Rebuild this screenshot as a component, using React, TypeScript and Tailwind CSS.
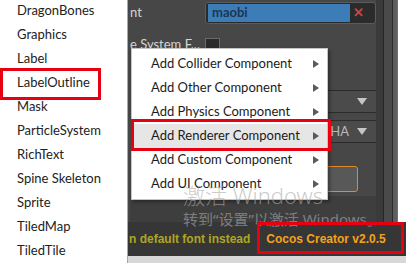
import { useState } from "react";

const components = [
  "DragonBones",
  "Graphics",
  "Label",
  "LabelOutline",
  "Mask",
  "ParticleSystem",
  "RichText",
  "Spine Skeleton",
  "Sprite",
  "TiledMap",
  "TiledTile",
];

const menuItems = [
  "Add Collider Component",
  "Add Other Component",
  "Add Physics Component",
  "Add Renderer Component",
  "Add Custom Component",
  "Add UI Component",
];

function Arrow() {
  return (
    <svg width="6" height="8" viewBox="0 0 6 8" className="shrink-0">
      <path d="M0 0 L6 4 L0 8 Z" fill="#5a5a5a" />
    </svg>
  );
}

function Caret() {
  return (
    <svg width="10" height="7" viewBox="0 0 10 7" className="shrink-0">
      <path d="M0 0 L10 0 L5 7 Z" fill="#c6c6c6" />
    </svg>
  );
}

export default function App() {
  const [active] = useState("Add Renderer Component");

  return (
    <div
      className="relative flex w-[406px] h-[263px] overflow-hidden bg-[#d8d8d8]"
      style={{ fontFamily: 'Lato, "Noto Sans CJK SC", sans-serif' }}
    >
      {/* component list */}
      <div className="w-[128px] shrink-0 bg-white border-r border-[#a8a8a8] flex flex-col text-[13px] text-[#222]">
        <div className="-mt-[1px] flex flex-col">
          {components.map((c) => (
            <div key={c} className="h-6 flex items-center pl-[17px]">
              {c}
            </div>
          ))}
        </div>
      </div>

      {/* inspector */}
      <div className="flex-1 flex flex-col">
        <div className="h-[222px] flex bg-[#3c3c3c]">
          <div className="w-[248px] shrink-0 flex flex-col bg-[#474747] pl-[2px] text-[13px] text-[#d4d4d4]">
            <div className="h-6 flex items-center pt-[1px]">
              <span className="w-[75px]">nt</span>
              <div className="flex-1 h-[22px] flex items-center rounded-[3px] border border-[#5c5c5c] bg-[#2b2b2b] pl-[2px] pr-[8px]">
                <div className="w-[142px] h-[18px] bg-[#3d7db7] flex items-center pl-[4px] font-bold text-[#1c3654]">
                  maobi
                </div>
                <span className="flex-1 text-center text-[#cc4242] font-bold text-[13px] leading-none">✕</span>
              </div>
            </div>
            <div className="h-[26px] mt-[8px] flex items-center">
              <span className="w-[75px] whitespace-nowrap">e System F...</span>
              <div className="w-[15px] h-[15px] bg-[#2a2a2a] border border-[#6a6a6a]" />
            </div>
            <div className="mt-[32px] ml-[75px] w-[173px] h-[23px] flex items-center justify-end pr-[10px] rounded-[3px] border border-[#2b2b2b] bg-[#4b4b4b]">
              <Caret />
            </div>
            <div className="mt-[7px] ml-[75px] w-[173px] h-[23px] flex items-center justify-end pr-[10px] rounded-[3px] border border-[#2b2b2b] bg-[#4b4b4b] text-[#b8b8b8]">
              <span className="w-[21px] mr-[8px] overflow-hidden flex justify-end whitespace-nowrap">SRC_ALPHA</span>
              <Caret />
            </div>
            <div className="mt-[23px] ml-[75px] w-[153px] h-[26px] rounded-[3px] border border-[#e08a2c] bg-[#585858]" />
            <div className="flex-1 mt-[4px] bg-[#3e3e3e]" />
          </div>
          <div className="w-[7px] bg-[#3a3a3a]" />
          <div className="w-px bg-[#262626]" />
          <div className="w-[8px] bg-[#4a4a4a]" />
          <div className="w-px bg-[#2b2b2b]" />
          <div className="w-[4px] bg-[#5e5e5e]" />
          <div className="w-px bg-[#3c7fc0]" />
          <div className="flex-1 bg-white" />
        </div>
        <div
          className="h-[34px] flex items-center bg-[#363636] pl-[1px] text-[12px] font-bold whitespace-nowrap"
          style={{ fontFamily: '"Liberation Sans", sans-serif' }}
        >
          <span className="text-[#aea622]">n default font instead</span>
          <span className="ml-[7px] w-px h-[16px] bg-[#6e6e6e]" />
          <span className="ml-[8px] text-[#f7a21b]">Cocos Creator v2.0.5</span>
        </div>
      </div>

      {/* context menu */}
      <div className="absolute left-[131px] top-[48px] w-[197px] py-[3px] bg-white border border-[#c4c4c4] shadow-[2px_2px_3px_rgba(0,0,0,0.35)] text-[13px] text-[#1b1b1b]">
        {menuItems.map((m) => (
          <div
            key={m}
            className={`h-6 flex items-center pl-[19px] pr-[8px] ${m === active ? "bg-[#e6e6e6]" : ""}`}
          >
            <span className="flex-1 whitespace-nowrap">{m}</span>
            <Arrow />
          </div>
        ))}
      </div>

      {/* windows activation watermark */}
      <div
        className="absolute left-[183px] top-[184px] flex flex-col pointer-events-none text-[rgba(170,170,170,0.62)] whitespace-nowrap leading-none"
        style={{ fontFamily: '"Noto Sans", "Noto Sans CJK SC", sans-serif' }}
      >
        <span className="text-[22px] font-light">激活 Windows</span>
        <span className="mt-[6px] text-[15px]">转到“设置”以激活 Windows。</span>
      </div>

      {/* annotation boxes */}
      <div className="absolute left-0 top-[68px] w-[101px] h-[32px] border-[3px] border-[#e60012]" />
      <div className="absolute left-[131px] top-[119px] w-[200px] h-[32px] border-[3px] border-[#e60012]" />
      <div className="absolute left-[257px] top-[222px] w-[147px] h-[32px] border-[3px] border-[#e60012]" />
    </div>
  );
}
